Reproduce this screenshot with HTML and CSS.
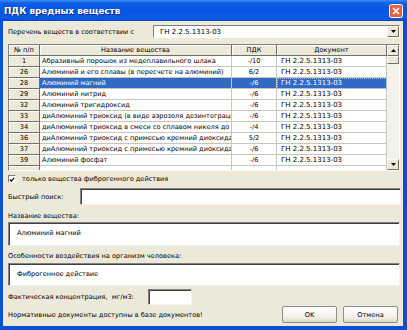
FILE: index.html
```html
<!DOCTYPE html>
<html lang="ru">
<head>
    <meta charset="UTF-8">
    <title>ПДК вредных веществ</title>
    <link rel="stylesheet" href="styles.css">
</head>
<body>

    <div class="window">
        <div class="titleBar">
            <span class="caption">ПДК вредных веществ</span>
            <span class="closeBtn">
                <svg width="14" height="14" viewBox="0 0 14 14">
                    <rect x="0.5" y="0.5" width="13" height="13" rx="2" fill="#E0603F" stroke="#fff"/>
                    <path d="M4 4 L10 10 M10 4 L4 10" stroke="#fff" stroke-width="1.7"/>
                </svg>
            </span>
        </div>

        <div class="client">
            <div class="comboRow">
                <span class="lbl">Перечень веществ в соответствии с</span>
                <div class="combo">
                    <span class="comboText">ГН 2.2.5.1313-03</span>
                    <span class="btn3d dropBtn"><svg width="5" height="3" viewBox="0 0 5 3"><path d="M0 0 H5 L2.5 3 Z" fill="#000"/></svg></span>
                </div>
            </div>

            <div class="grid">
                <div class="gridBody">
                    <div class="gRow head">
                        <div class="c num">№ п/п</div>
                        <div class="c name center">Название вещества</div>
                        <div class="c pdk">ПДК</div>
                        <div class="c doc center">Документ</div>
                    </div>
                    <div class="gRow">
                        <div class="c num">1</div>
                        <div class="c name">Абразивный порошок из медеплавильного шлака</div>
                        <div class="c pdk">-/10</div>
                        <div class="c doc">ГН 2.2.5.1313-03</div>
                    </div>
                    <div class="gRow">
                        <div class="c num">26</div>
                        <div class="c name">Алюминий и его сплавы (в пересчете на алюминий)</div>
                        <div class="c pdk">6/2</div>
                        <div class="c doc">ГН 2.2.5.1313-03</div>
                    </div>
                    <div class="gRow selected">
                        <div class="c num">28</div>
                        <div class="c name">Алюминий магний</div>
                        <div class="c pdk">-/6</div>
                        <div class="c doc focus">ГН 2.2.5.1313-03</div>
                    </div>
                    <div class="gRow">
                        <div class="c num">29</div>
                        <div class="c name">Алюминий нитрид</div>
                        <div class="c pdk">-/6</div>
                        <div class="c doc">ГН 2.2.5.1313-03</div>
                    </div>
                    <div class="gRow">
                        <div class="c num">32</div>
                        <div class="c name">Алюминий тригидроксид</div>
                        <div class="c pdk">-/6</div>
                        <div class="c doc">ГН 2.2.5.1313-03</div>
                    </div>
                    <div class="gRow">
                        <div class="c num">33</div>
                        <div class="c name">диАлюминий триоксид (в виде аэрозоля дезинтеграции)</div>
                        <div class="c pdk">-/6</div>
                        <div class="c doc">ГН 2.2.5.1313-03</div>
                    </div>
                    <div class="gRow">
                        <div class="c num">34</div>
                        <div class="c name">диАлюминий триоксид в смеси со сплавом никеля до 10%</div>
                        <div class="c pdk">-/4</div>
                        <div class="c doc">ГН 2.2.5.1313-03</div>
                    </div>
                    <div class="gRow">
                        <div class="c num">36</div>
                        <div class="c name">диАлюминий триоксид с примесью кремний диоксида</div>
                        <div class="c pdk">5/2</div>
                        <div class="c doc">ГН 2.2.5.1313-03</div>
                    </div>
                    <div class="gRow">
                        <div class="c num">37</div>
                        <div class="c name">диАлюминий триоксид с примесью кремний диоксида</div>
                        <div class="c pdk">-/6</div>
                        <div class="c doc">ГН 2.2.5.1313-03</div>
                    </div>
                    <div class="gRow">
                        <div class="c num">39</div>
                        <div class="c name">Алюминий фосфат</div>
                        <div class="c pdk">-/6</div>
                        <div class="c doc">ГН 2.2.5.1313-03</div>
                    </div>
                    <div class="gRow">
                        <div class="c num"></div>
                        <div class="c name"></div>
                        <div class="c pdk"></div>
                        <div class="c doc"></div>
                    </div>
                </div>
                <div class="vScroll">
                    <span class="btn3d arrowBtn"><svg width="5" height="3" viewBox="0 0 5 3"><path d="M0 3 H5 L2.5 0 Z" fill="#000"/></svg></span>
                    <span class="btn3d thumb"></span>
                    <span class="track"></span>
                    <span class="btn3d arrowBtn"><svg width="5" height="3" viewBox="0 0 5 3"><path d="M0 0 H5 L2.5 3 Z" fill="#000"/></svg></span>
                </div>
            </div>

            <div class="checkRow">
                <span class="checkBox">
                    <svg width="7" height="7" viewBox="0 0 7 7"><path d="M1 3.5 L2.8 5.3 L6 1.5" stroke="#000" stroke-width="1.4" fill="none"/></svg>
                </span>
                <span>только вещества фиброгенного действия</span>
            </div>

            <div class="searchRow">
                <span class="lbl">Быстрый поиск:</span>
                <div class="edit searchEdit"></div>
            </div>

            <div class="caption2">Название вещества:</div>
            <div class="edit memo">Алюминий магний</div>

            <div class="caption2 second">Особенности воздействия на организм человека:</div>
            <div class="edit memo memo2">Фиброгенное действие</div>

            <div class="concRow">
                <span class="lbl">Фактическая концентрация,&nbsp; мг/м3:</span>
                <div class="edit concEdit"></div>
            </div>

            <div class="bottomRow">
                <span class="note">Нормативные документы доступны в базе документов!</span>
                <span class="button">OK</span>
                <span class="button">Отмена</span>
            </div>
        </div>
    </div>

</body>
</html>
```

FILE: styles.css
```css
html, body {
    margin: 0;
    padding: 0;
    background: #fff;
}
.window {
    width: 407px;
    height: 330px;
    box-sizing: border-box;
    display: flex;
    flex-direction: column;
    background: #0A4FD6;
    padding: 0 4px 4px 3px;
    font-family: "DejaVu Sans", sans-serif;
    font-size: 6.6px;
    color: #000;
}
.titleBar {
    height: 21px;
    flex: none;
    margin: 0 -4px 0 -3px;
    padding: 0 4px 0 4px;
    display: flex;
    align-items: center;
    background: linear-gradient(to bottom, #3C8CF5 0%, #0F5EE8 15%, #0455E4 55%, #0A5BEA 85%, #0745C8 100%);
}
.titleBar .caption {
    flex: 1;
    color: #fff;
    font-weight: bold;
    font-size: 8.8px;
    padding-top: 1px;
    text-shadow: 1px 1px 0 #0A2A8A;
}
.closeBtn {
    width: 14px;
    height: 14px;
    margin-top: 1px;
    display: flex;
}

.client {
    flex: 1;
    background: #ECE9D8;
    padding: 4px 3px 0 5px;
    display: flex;
    flex-direction: column;
}

.btn3d {
    box-sizing: border-box;
    background: #ECE9D8;
    border: 1px solid;
    border-color: #fff #716F64 #716F64 #fff;
    display: flex;
    align-items: center;
    justify-content: center;
}

.comboRow {
    height: 13px;
    display: flex;
    align-items: center;
}
.comboRow .lbl {
    width: 145px;
}
.combo {
    flex: 1;
    height: 13px;
    box-sizing: border-box;
    background: #fff;
    border: 1px solid;
    border-color: #808080 #fff #fff #808080;
    display: flex;
    align-items: center;
}
.comboText {
    flex: 1;
    padding-left: 6px;
    font-size: 7px;
}
.dropBtn {
    width: 12px;
    height: 11px;
}

.grid {
    margin-top: 6px;
    height: 127px;
    box-sizing: border-box;
    border: 1px solid;
    border-color: #808080 #fff #fff #808080;
    background: #fff;
    display: flex;
    overflow: hidden;
}
.gridBody {
    flex: 1;
    overflow: hidden;
}
.gRow {
    display: flex;
    height: 11px;
}
.c {
    box-sizing: border-box;
    height: 11px;
    line-height: 10px;
    white-space: nowrap;
    overflow: hidden;
    border-right: 1px solid #C8C6BC;
    border-bottom: 1px solid #C8C6BC;
    padding-left: 2px;
}
.c.num {
    width: 31px;
    text-align: center;
    padding-left: 0;
    background: #ECE9D8;
    border-right-color: #716F64;
    border-bottom-color: #716F64;
    box-shadow: inset 1px 1px 0 #fff;
}
.c.name { width: 192px; }
.c.pdk { width: 45px; text-align: center; padding-left: 0; }
.c.doc { width: 110px; padding-left: 4px; font-size: 7px; }
.center { text-align: center; }
.gRow.head .c {
    background: #ECE9D8;
    border-right-color: #716F64;
    border-bottom-color: #716F64;
    box-shadow: inset 1px 1px 0 #fff;
    padding-left: 0;
    font-size: 6.6px;
}
.gRow.selected .c:not(.num) {
    background: #316AC5;
    color: #fff;
}
.gRow.selected .c.focus {
    outline: 1px dotted #9CB8E8;
    outline-offset: -1px;
}

.vScroll {
    width: 12px;
    display: flex;
    flex-direction: column;
    background: #F2F1EA;
}
.arrowBtn {
    height: 11px;
    flex: none;
}
.thumb {
    height: 8px;
    flex: none;
}
.track {
    flex: 1;
}

.checkRow {
    margin-top: 4px;
    height: 8px;
    display: flex;
    align-items: center;
    gap: 6px;
}
.checkBox {
    width: 8px;
    height: 8px;
    box-sizing: border-box;
    background: #fff;
    border: 1px solid;
    border-color: #808080 #fff #fff #808080;
    display: flex;
    align-items: center;
    justify-content: center;
}

.edit {
    box-sizing: border-box;
    background: #fff;
    border: 1px solid;
    border-color: #808080 #F4F3EE #F4F3EE #808080;
    box-shadow: inset 1px 1px 0 #404040;
}

.searchRow {
    margin-top: 5px;
    height: 17px;
    display: flex;
    align-items: center;
}
.searchRow .lbl {
    width: 72px;
}
.searchEdit {
    flex: 1;
    height: 17px;
    margin-right: -1px;
}

.caption2 {
    margin-top: 6px;
    height: 10px;
    line-height: 10px;
}
.caption2.second {
    margin-top: 5px;
}
.memo {
    margin-top: 1px;
    height: 24px;
    padding: 6px 0 0 8px;
}
.memo2 {
    margin-top: 2px;
    height: 23px;
}

.concRow {
    margin-top: 3px;
    height: 16px;
    display: flex;
    align-items: center;
}
.concRow .lbl {
    width: 140px;
}
.concEdit {
    width: 44px;
    height: 16px;
}

.bottomRow {
    margin-top: 1px;
    height: 17px;
    display: flex;
    align-items: center;
}
.note {
    flex: 1;
}
.button {
    width: 55px;
    height: 17px;
    box-sizing: border-box;
    background: linear-gradient(to bottom, #FFFFFF, #F0EFE8 70%, #DCD8C8);
    border: 1px solid #8E8F8F;
    border-radius: 2px;
    display: flex;
    align-items: center;
    justify-content: center;
    margin-left: 6px;
}
.button:last-child {
    margin-right: 2px;
}
```
